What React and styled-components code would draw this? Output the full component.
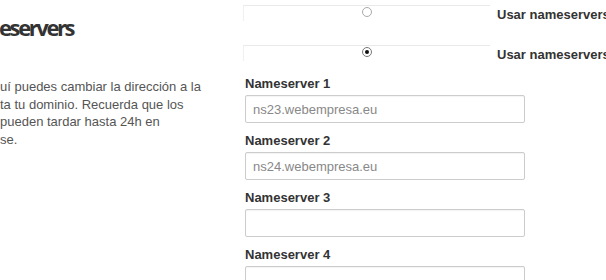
import React from 'react';
import styled, { createGlobalStyle } from 'styled-components';

const GlobalStyle = createGlobalStyle`
	html, body {
		margin: 0;
		padding: 0;
		background: #fff;
		overflow: hidden;
	}
	body {
		font-family: "Liberation Sans", Arial, sans-serif;
		font-size: 13px;
		color: #555;
	}
`;

const Page = styled.div`
	display: flex;
	width: 606px;
	height: 280px;
	overflow: hidden;
`;

const Intro = styled.div`
	flex: none;
	width: 243px;
	padding-top: 13px;
	box-sizing: border-box;
`;

const Title = styled.h2`
	margin: 0 0 0 -1px;
	font-family: "Open Sans", sans-serif;
	font-weight: 700;
	font-size: 22px;
	line-height: 28px;
	letter-spacing: -2.4px;
	color: #333;
`;

const Text = styled.p`
	margin: 37px 0 0;
	font-size: 13px;
	line-height: 17.5px;
	color: #555;
	white-space: nowrap;
`;

const Form = styled.div`
	flex: 1;
	display: flex;
	flex-direction: column;
	padding-top: 5px;
`;

const Options = styled.div`
	flex: none;
	display: flex;
	flex-direction: column;
	gap: 9px;
`;

const Option = styled.label`
	flex: none;
	display: flex;
	align-items: flex-start;
	gap: 7px;
	height: 31px;
	white-space: nowrap;
`;

const RadioBox = styled.span`
	flex: none;
	display: flex;
	justify-content: center;
	width: 247px;
	height: 16px;
	border-top: 1px solid #e9e9e9;
	border-left: 1px solid #f0f0f0;
	box-sizing: border-box;
	padding-top: 1px;
`;

const Radio = styled.span`
	width: 10px;
	height: 10px;
	border-radius: 50%;
	border: 1px solid ${p => (p.checked ? '#777' : '#aaa')};
	box-sizing: border-box;
	display: flex;
	align-items: center;
	justify-content: center;
	background: #fff;

	&::after {
		content: '';
		width: 4px;
		height: 4px;
		border-radius: 50%;
		background: ${p => (p.checked ? '#111' : 'transparent')};
	}
`;

const OptionText = styled.span`
	font-weight: 700;
	color: #333;
	line-height: 16px;
	padding-top: 2px;
`;

const Field = styled.div`
	flex: none;
	display: flex;
	flex-direction: column;
	padding-left: 2px;
	margin-bottom: 10px;
`;

const FieldLabel = styled.div`
	font-weight: 700;
	color: #333;
	line-height: 16px;
	margin-bottom: 3px;
`;

const Input = styled.div`
	width: 280px;
	height: 28px;
	box-sizing: border-box;
	border: 1px solid #ccc;
	border-radius: 2px;
	box-shadow: inset 0 1px 1px rgba(0, 0, 0, 0.05);
	padding: 0 7px;
	display: flex;
	align-items: center;
	color: #888;
	font-size: 13px;
`;

const options = [
	{ text: 'Usar nameservers de Webempresa', checked: false },
	{ text: 'Usar nameservers personalizados', checked: true },
];

const servers = [
	{ label: 'Nameserver 1', value: 'ns23.webempresa.eu' },
	{ label: 'Nameserver 2', value: 'ns24.webempresa.eu' },
	{ label: 'Nameserver 3', value: '' },
	{ label: 'Nameserver 4', value: '' },
];

export default function App() {
	return (
		<>
			<GlobalStyle />
			<Page>
				<Intro>
					<Title>eservers</Title>
					<Text>
						uí puedes cambiar la dirección a la<br />
						ta tu dominio. Recuerda que los<br />
						pueden tardar hasta 24h en<br />
						se.
					</Text>
				</Intro>
				<Form>
					<Options>
						{options.map(o => (
							<Option key={o.text}>
								<RadioBox>
									<Radio checked={o.checked} />
								</RadioBox>
								<OptionText>{o.text}</OptionText>
							</Option>
						))}
					</Options>
					{servers.map(s => (
						<Field key={s.label}>
							<FieldLabel>{s.label}</FieldLabel>
							<Input>{s.value}</Input>
						</Field>
					))}
				</Form>
			</Page>
		</>
	);
}
